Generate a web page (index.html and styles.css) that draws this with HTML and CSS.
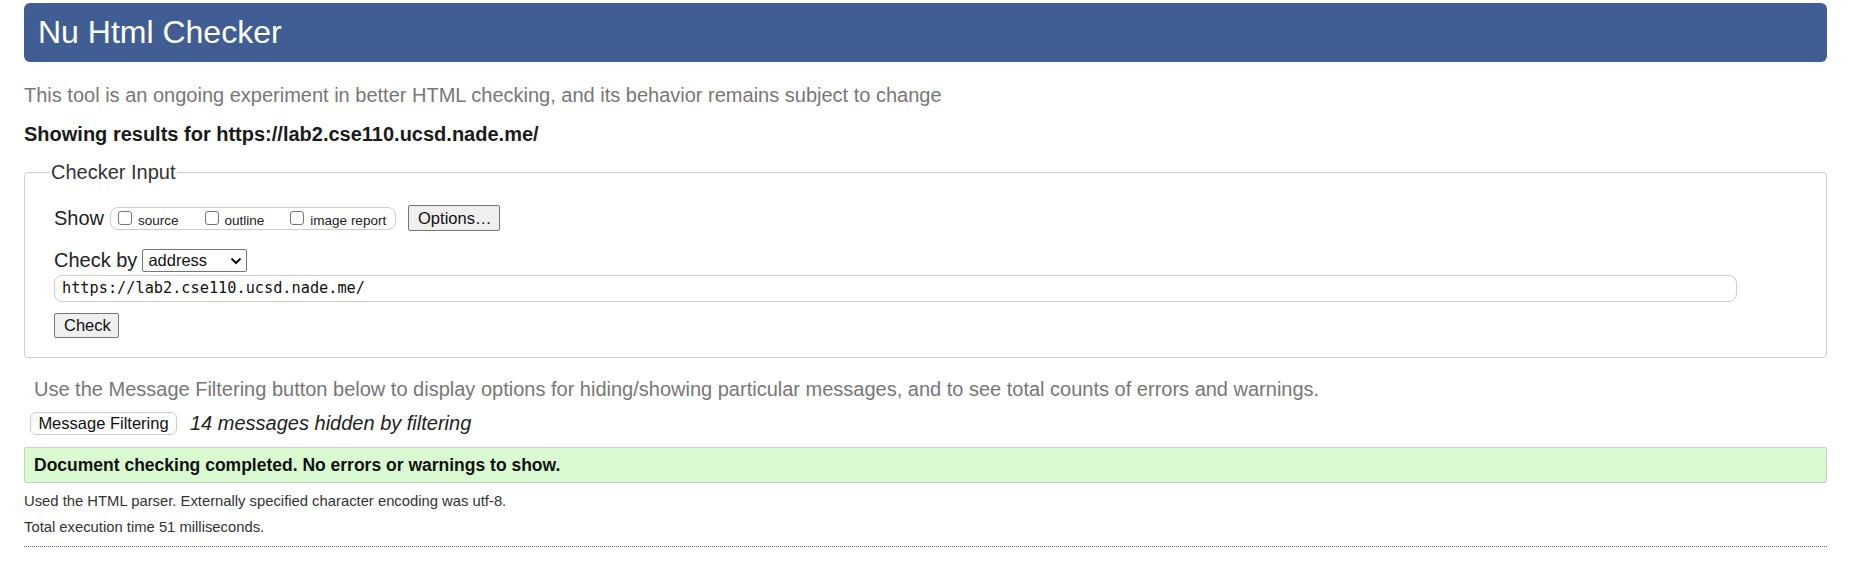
FILE: index.html
```html
<!DOCTYPE html>
<html lang="en">
<head>
<meta charset="utf-8">
<title>Nu Html Checker</title>
<link rel="stylesheet" href="styles.css">
</head>
<body>
  <h1 class="title">Nu Html Checker</h1>
  <p class="intro">This tool is an ongoing experiment in better HTML checking, and its behavior remains subject to change</p>
  <p class="showing">Showing results for https://lab2.cse110.ucsd.nade.me/</p>

  <fieldset class="checker">
    <legend class="legend">Checker Input</legend>
    <div class="row show-row">
      <span class="label">Show</span>
      <div class="options-group">
        <label class="opt"><input type="checkbox" class="cb"><span>source</span></label>
        <label class="opt"><input type="checkbox" class="cb"><span>outline</span></label>
        <label class="opt"><input type="checkbox" class="cb"><span>image report</span></label>
      </div>
      <button class="btn btn-options" type="button">Options…</button>
    </div>
    <div class="row by-row">
      <span class="label">Check by</span>
      <div class="select">
        <span class="select-text">address</span>
        <svg class="chev" width="12" height="8" viewBox="0 0 12 8"><path d="M1.5 1.5 L6 6 L10.5 1.5" fill="none" stroke="#111" stroke-width="2"/></svg>
      </div>
    </div>
    <div class="url-input">https://lab2.cse110.ucsd.nade.me/</div>
    <div class="row check-row">
      <button class="btn btn-check" type="button">Check</button>
    </div>
  </fieldset>

  <p class="filter-note">Use the Message Filtering button below to display options for hiding/showing particular messages, and to see total counts of errors and warnings.</p>
  <div class="filter-row">
    <button class="btn-filter" type="button">Message Filtering</button>
    <span class="hidden-count">14 messages hidden by filtering</span>
  </div>

  <div class="success">Document checking completed. No errors or warnings to show.</div>

  <p class="meta">Used the HTML parser. Externally specified character encoding was utf-8.</p>
  <p class="meta meta2">Total execution time 51 milliseconds.</p>
  <hr class="rule">
</body>
</html>
```
FILE: styles.css
```css
html, body {
  background: #fff;
}
body {
  margin: 0;
  padding: 3px 24px 0;
  font-family: "Liberation Sans", Arial, sans-serif;
  font-size: 20px;
  color: #222;
}
.title {
  margin: 0;
  height: 59px;
  line-height: 59px;
  padding: 0 14px;
  background: #415e94;
  color: #fff;
  font-size: 32px;
  font-weight: normal;
  border-radius: 6px;
}
.intro {
  margin: 22px 0 0;
  line-height: 23px;
  color: #777;
}
.showing {
  margin: 16px 0 0;
  line-height: 23px;
  font-weight: bold;
  color: #1a1a1a;
}
.checker {
  margin: 15px 0 0;
  padding: 21px 0 19px 29px;
  border: 1px solid #ccc;
  border-radius: 4px;
  min-width: 0;
}
.legend {
  margin-left: -4px;
  padding: 0 1px;
  line-height: 23px;
  color: #333;
}
.row {
  display: flex;
  align-items: center;
}
.label {
  line-height: 23px;
  color: #222;
}
.show-row {
  height: 26px;
}
.options-group {
  display: flex;
  align-items: center;
  margin-left: 6px;
  height: 21px;
  width: 272px;
  padding: 0 5px 0 7px;
  border: 1px solid #ccc;
  border-radius: 8px;
  font-size: 13.5px;
  gap: 26px;
}
.opt {
  display: flex;
  align-items: center;
  color: #222;
}
.opt span {
  margin-top: 4px;
}
.cb {
  appearance: none;
  -webkit-appearance: none;
  width: 14px;
  height: 14px;
  margin: 0 6px 0 0;
  border: 1px solid #767676;
  border-radius: 3px;
  background: #fff;
}
.btn {
  font-family: "Liberation Sans", Arial, sans-serif;
  font-size: 16.5px;
  color: #111;
  background: #efefef;
  border: 1px solid #767676;
  border-radius: 2px;
  height: 25px;
  padding: 0 9px;
  line-height: 23px;
}
.btn-options {
  margin-left: 12px;
  width: 92px;
  height: 26px;
}
.by-row {
  margin-top: 18px;
  height: 23px;
}
.select {
  display: flex;
  align-items: center;
  justify-content: space-between;
  margin-left: 5px;
  height: 21px;
  padding: 0 4px 0 5px;
  border: 1px solid #767676;
  border-radius: 2px;
  box-sizing: content-box;
  width: 94px;
  font-size: 16.5px;
  color: #111;
}
.chev {
  display: block;
}
.url-input {
  margin-top: 3px;
  width: 1667px;
  height: 25px;
  line-height: 25px;
  padding: 0 7px;
  border: 1px solid #ccc;
  border-radius: 8px;
  font-family: "DejaVu Sans Mono", "Liberation Mono", monospace;
  font-size: 15.25px;
  color: #111;
}
.check-row {
  margin-top: 11px;
}
.btn-check {
  width: 65px;
}
.filter-note {
  margin: 20px 0 0;
  padding-left: 10px;
  line-height: 23px;
  color: #777;
}
.filter-row {
  display: flex;
  align-items: center;
  margin-top: 11px;
  padding-left: 6px;
}
.btn-filter {
  font-family: "Liberation Sans", Arial, sans-serif;
  font-size: 16.5px;
  color: #111;
  background: #fff;
  border: 1px solid #ccc;
  border-radius: 6px;
  height: 23px;
  width: 147px;
  padding: 0;
  line-height: 21px;
}
.hidden-count {
  margin-left: 13px;
  font-style: italic;
  color: #222;
}
.success {
  margin-top: 12px;
  height: 34px;
  line-height: 34px;
  padding: 0 9px;
  background: #d9fad0;
  border: 1px solid #ccc;
  border-radius: 2px;
  font-size: 17.5px;
  font-weight: bold;
  color: #111;
}
.meta {
  margin: 10px 0 0;
  font-size: 14.8px;
  line-height: 17px;
  color: #333;
}
.meta2 {
  margin-top: 9px;
}
.rule {
  margin: 10px 0 0;
  border: 0;
  border-top: 1px dotted #666;
  height: 0;
}
```
